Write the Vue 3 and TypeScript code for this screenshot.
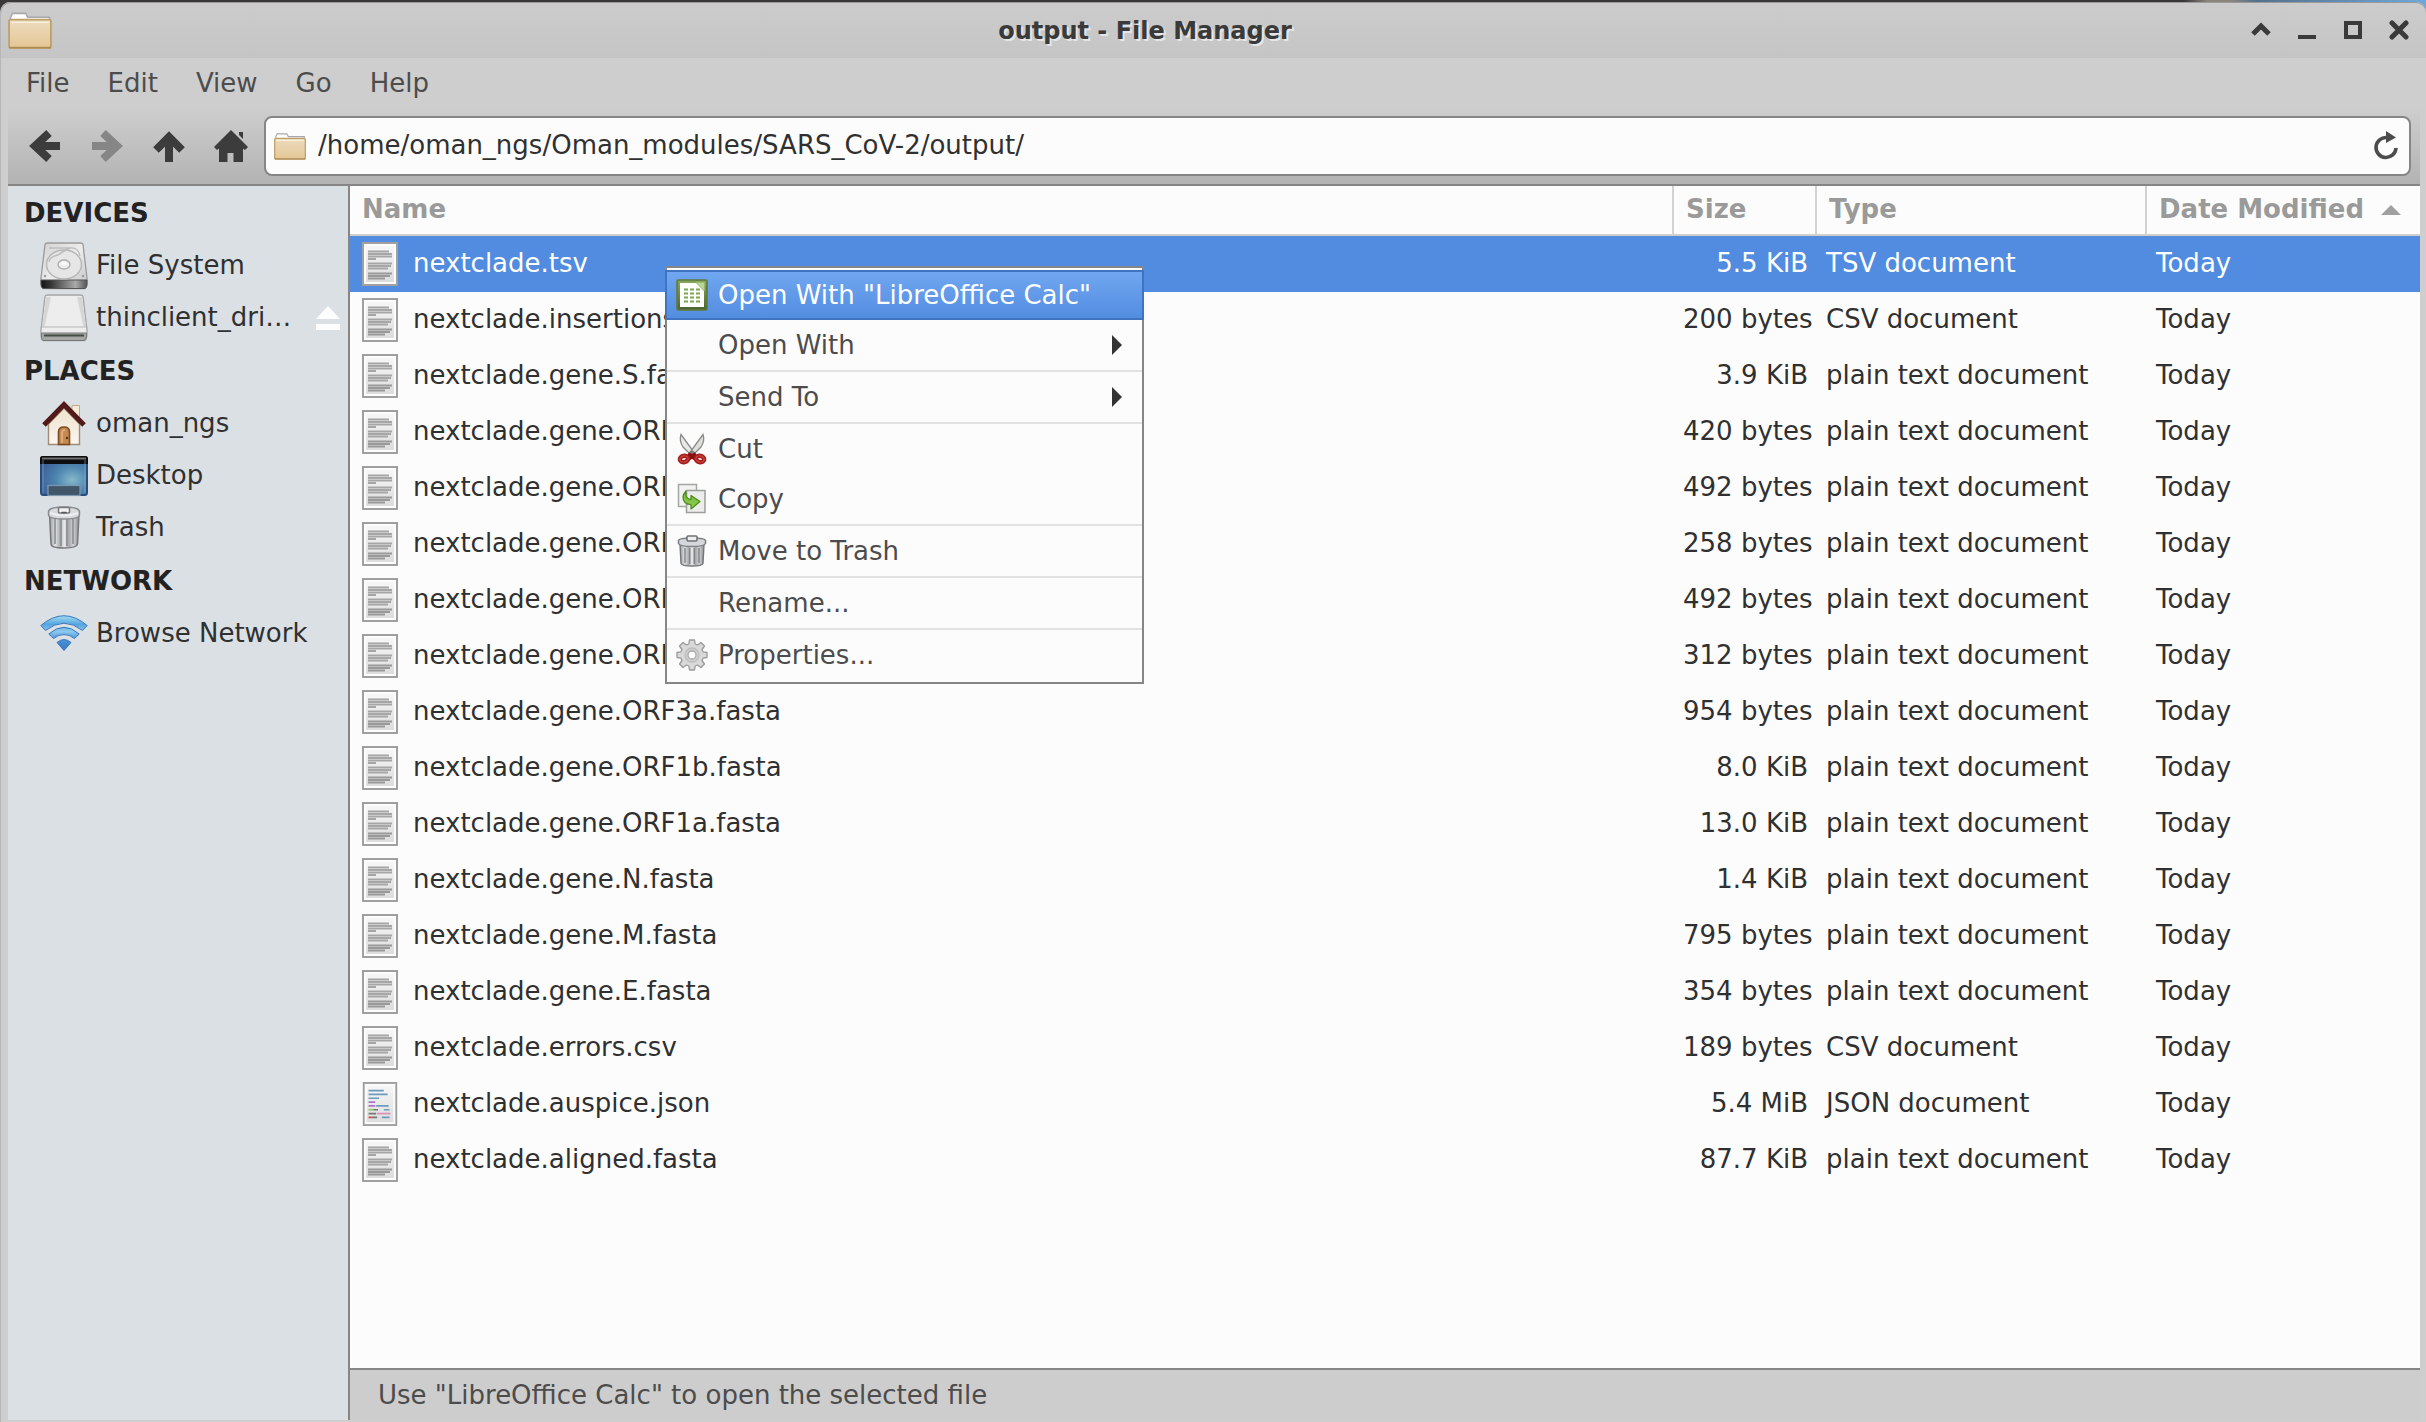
<script setup lang="ts">
import { ref } from 'vue'

interface FileRow {
  name: string
  size: string
  type: string
  icon: 'text' | 'json'
}

interface MenuEntry {
  label: string
  icon?: string
  submenu?: boolean
  endsGroup?: boolean
}

interface Place {
  label: string
  icon: string
  ejectable?: boolean
}

const path = ref('/home/oman_ngs/Oman_modules/SARS_CoV-2/output/')
const selected = ref('nextclade.tsv')

const menus = ['File', 'Edit', 'View', 'Go', 'Help']

const sections: { title: string; places: Place[] }[] = [
  {
    title: 'DEVICES',
    places: [
      { label: 'File System', icon: 'harddisk' },
      { label: 'thinclient_dri…', icon: 'removable', ejectable: true },
    ],
  },
  {
    title: 'PLACES',
    places: [
      { label: 'oman_ngs', icon: 'house' },
      { label: 'Desktop', icon: 'desktop' },
      { label: 'Trash', icon: 'trash-place' },
    ],
  },
  { title: 'NETWORK', places: [{ label: 'Browse Network', icon: 'wifi' }] },
]

const plain = (name: string, size: string): FileRow => ({
  name,
  size,
  type: 'plain text document',
  icon: 'text',
})

const files: FileRow[] = [
  { name: 'nextclade.tsv', size: '5.5 KiB', type: 'TSV document', icon: 'text' },
  { name: 'nextclade.insertions.csv', size: '200 bytes', type: 'CSV document', icon: 'text' },
  plain('nextclade.gene.S.fasta', '3.9 KiB'),
  plain('nextclade.gene.ORF9b.fasta', '420 bytes'),
  plain('nextclade.gene.ORF8.fasta', '492 bytes'),
  plain('nextclade.gene.ORF7b.fasta', '258 bytes'),
  plain('nextclade.gene.ORF7a.fasta', '492 bytes'),
  plain('nextclade.gene.ORF6.fasta', '312 bytes'),
  plain('nextclade.gene.ORF3a.fasta', '954 bytes'),
  plain('nextclade.gene.ORF1b.fasta', '8.0 KiB'),
  plain('nextclade.gene.ORF1a.fasta', '13.0 KiB'),
  plain('nextclade.gene.N.fasta', '1.4 KiB'),
  plain('nextclade.gene.M.fasta', '795 bytes'),
  plain('nextclade.gene.E.fasta', '354 bytes'),
  { name: 'nextclade.errors.csv', size: '189 bytes', type: 'CSV document', icon: 'text' },
  { name: 'nextclade.auspice.json', size: '5.4 MiB', type: 'JSON document', icon: 'json' },
  plain('nextclade.aligned.fasta', '87.7 KiB'),
]

const contextMenu: MenuEntry[] = [
  { label: 'Open With "LibreOffice Calc"', icon: 'calc' },
  { label: 'Open With', submenu: true, endsGroup: true },
  { label: 'Send To', submenu: true, endsGroup: true },
  { label: 'Cut', icon: 'cut' },
  { label: 'Copy', icon: 'copy', endsGroup: true },
  { label: 'Move to Trash', icon: 'trash', endsGroup: true },
  { label: 'Rename...', endsGroup: true },
  { label: 'Properties...', icon: 'gear' },
]
</script>

<template>
  <svg class="sprite" aria-hidden="true">
    <defs>
      <linearGradient id="g-folder" x1="0" y1="0" x2="0" y2="1">
        <stop offset="0" stop-color="#ecdcbe" /><stop offset="1" stop-color="#e4c695" />
      </linearGradient>
      <linearGradient id="g-paper" x1="0" y1="0" x2="0" y2="1">
        <stop offset="0" stop-color="#f6f6f6" /><stop offset="1" stop-color="#dddddd" />
      </linearGradient>
      <linearGradient id="g-disk" x1="0" y1="0" x2="1" y2="1">
        <stop offset="0" stop-color="#d2d2d2" /><stop offset=".5" stop-color="#ededed" /><stop offset="1" stop-color="#c4c4c4" />
      </linearGradient>
      <linearGradient id="g-base" x1="0" y1="0" x2="1" y2="0">
        <stop offset="0" stop-color="#111" /><stop offset=".2" stop-color="#333" /><stop offset=".75" stop-color="#aaa" /><stop offset="1" stop-color="#555" />
      </linearGradient>
      <linearGradient id="g-wall" x1="0" y1="0" x2="0" y2="1">
        <stop offset="0" stop-color="#efe2cf" /><stop offset="1" stop-color="#fbf6ef" />
      </linearGradient>
      <radialGradient id="g-screen" cx=".68" cy=".6" r=".7">
        <stop offset="0" stop-color="#86b9cb" /><stop offset=".5" stop-color="#4f86b0" /><stop offset="1" stop-color="#3d6399" />
      </radialGradient>
      <linearGradient id="g-can" x1="0" y1="0" x2="1" y2="0">
        <stop offset="0" stop-color="#999b9e" /><stop offset=".2" stop-color="#e2e3e4" /><stop offset=".35" stop-color="#a9abae" />
        <stop offset=".5" stop-color="#ececec" /><stop offset=".65" stop-color="#a5a7aa" /><stop offset=".8" stop-color="#d2d3d4" /><stop offset="1" stop-color="#8b8d90" />
      </linearGradient>
      <linearGradient id="g-wifi" x1="0" y1="0" x2="0" y2="48" gradientUnits="userSpaceOnUse">
        <stop offset=".12" stop-color="#a3dbf5" /><stop offset=".3" stop-color="#55a5e0" /><stop offset=".45" stop-color="#8ec8ef" /><stop offset=".6" stop-color="#4a93d6" /><stop offset="1" stop-color="#2f6ab8" />
      </linearGradient>
      <linearGradient id="g-calc" x1="0" y1="0" x2="0" y2="1">
        <stop offset="0" stop-color="#8aa860" /><stop offset="1" stop-color="#4c6430" />
      </linearGradient>
      <linearGradient id="g-green" x1="0" y1="0" x2="0" y2="1">
        <stop offset="0" stop-color="#6fb536" /><stop offset="1" stop-color="#93cf55" />
      </linearGradient>
    </defs>

    <symbol id="folder" viewBox="0 0 46 40">
      <path d="M2.500 12V7L4.500 2.500H18.500L20.500 6.500H43.500V12Z" fill="#fff" stroke="#a8a8b0" stroke-width="1.600" />
      <rect x="1" y="9" width="44" height="30" rx="1.500" fill="url(#g-folder)" stroke="#bf9f68" stroke-width="1.800" />
      <path d="M3 12H43" stroke="#f8f0e0" stroke-width="1.500" />
      <path d="M1 38.500H45" stroke="#a98b54" stroke-width="1.500" />
    </symbol>

    <symbol id="text" viewBox="0 0 36 44">
      <rect x="1" y="1" width="34" height="42" fill="#fcfcfc" stroke="#a0a0a0" stroke-width="2" />
      <rect x="4" y="4" width="28" height="36" fill="url(#g-paper)" />
      <g stroke="#a6a6a6" stroke-width="2">
        <path d="M6 9.500H27M6 12H30M6 14.500H30M6 17H14M6 21.500H30M6 24H29M6 26.500H26" />
        <path d="M6 31.500H30M6 34H28M6 36.500H23" stroke="#999" />
      </g>
    </symbol>

    <symbol id="json" viewBox="0 0 36 46">
      <rect x="1" y="1" width="34" height="44" fill="#fcfcfc" stroke="#a0a0a0" stroke-width="2" />
      <rect x="4" y="4" width="28" height="38" fill="url(#g-paper)" />
      <g stroke-width="1.800" fill="none">
        <path d="M6 9H22M6 13H26M6 17H17M14 25H27M22 29H28M20 37H28" stroke="#6a9cc0" />
        <path d="M6 21H13M6 25H13" stroke="#b070d0" />
        <path d="M6 29H11" stroke="#88cc66" /><path d="M11 29H16M6 33H14M9 37H15" stroke="#777" />
        <path d="M15 33H29" stroke="#d890b8" /><path d="M6 37H9" stroke="#e04040" />
      </g>
    </symbol>

    <symbol id="harddisk" viewBox="0 0 48 48">
      <path d="M5 2.500Q5.500 1 7.500 1H40.500Q42.500 1 43 2.500L47 36Q47.500 46 44.500 46.500H3.500Q.5 46 1 36Z" fill="url(#g-disk)" stroke="#9a9a9a" stroke-width="1.300" />
      <path d="M1 38H47V42Q47 46.500 44 46.500H4Q1 46.500 1 42Z" fill="url(#g-base)" stroke="#555" />
      <ellipse cx="24" cy="22.500" rx="17.500" ry="14.500" fill="#e6e6e6" stroke="#b5b5b5" stroke-width="1.400" />
      <path d="M9 6H30Q22 10 18 13Q9 15 9 20M30 6Q38 5 40 14" fill="none" stroke="#bdbdbd" stroke-width="1.400" />
      <ellipse cx="24" cy="22.500" rx="6" ry="4.500" fill="#eee" stroke="#b0b0b0" stroke-width="1.400" />
      <ellipse cx="24" cy="21.500" rx="3" ry="2" fill="#fafafa" />
      <circle cx="5" cy="34" r="1.200" fill="#999" /><circle cx="43" cy="34" r="1.200" fill="#999" />
    </symbol>

    <symbol id="removable" viewBox="0 0 48 48">
      <path d="M5 2.500Q5.500 1 7.500 1H40.500Q42.500 1 43 2.500L47 36Q47.500 46 44.500 46.500H3.500Q.5 46 1 36Z" fill="#ededed" stroke="#a4a4a4" stroke-width="1.300" />
      <path d="M6 3H11L4.500 33H2ZM42 3H37L43.500 33H46Z" fill="#d6d6d6" />
      <path d="M2 33H46" stroke="#c8c8c8" stroke-width="1.500" />
      <path d="M1.500 39H46.500V42Q46.500 46 44 46.500H4Q1 46.500 1.500 42Z" fill="#a5a8a5" stroke="#777" />
      <path d="M4 41.500H44" stroke="#444a44" stroke-width="2" />
    </symbol>

    <symbol id="house" viewBox="0 0 48 48">
      <path d="M32 18V5.500H39.500V18Z" fill="#f5ead8" stroke="#c2a888" />
      <path d="M8.500 24L24 8L39.500 24V44.500H8.500Z" fill="url(#g-wall)" stroke="#a08c74" stroke-width="1.400" />
      <path d="M4 25L24 4.500L44 25" fill="none" stroke="#51191a" stroke-width="5" stroke-linejoin="miter" />
      <path d="M18.500 44.500V32Q18.500 27 24 27Q29.500 27 29.500 32V44.500Z" fill="#c58a52" stroke="#7c4a20" stroke-width="1.600" />
      <path d="M22 43V33Q22 30 25 30" stroke="#deb383" stroke-width="1.600" fill="none" />
      <circle cx="27" cy="38" r="1.200" fill="#5a3416" />
    </symbol>

    <symbol id="desktop" viewBox="0 0 48 48">
      <rect x="1" y="5" width="46" height="38" rx="2.500" fill="url(#g-screen)" stroke="#294d7c" stroke-width="2" />
      <path d="M0 12V6.500Q0 4 2.500 4H45.500Q48 4 48 6.500V12Z" fill="#0c0d0e" />
      <path d="M2 6.500H46" stroke="#6e6e6e" stroke-width="2" />
      <path d="M3 8V41M45 8V41" stroke="#8fb0cc" stroke-width="1" opacity=".6" />
      <rect x="8" y="33.500" width="32" height="10" fill="#42566a" stroke="#7c98ae" stroke-width="1.200" />
    </symbol>

    <symbol id="trash-place" viewBox="0 0 48 48">
      <path d="M9.500 10L11 40Q11 44 24 44T37.500 40L39 10Z" fill="url(#g-can)" stroke="#77797c" stroke-width="1.500" />
      <path d="M15 15V40M21 15V42M27 15V42M33 15V40" stroke="#8b8d90" stroke-width="1.600" />
      <path d="M8.500 8Q8.500 3 24 3T39.500 8V11Q39 15 24 15T8.500 11Z" fill="#d9dbdd" stroke="#85888c" stroke-width="1.500" />
      <path d="M10 9Q24 14 38 9" fill="none" stroke="#f2f2f2" stroke-width="1.500" />
      <rect x="18.500" y="3.500" width="11" height="5.500" rx="1" fill="#f2f2f2" stroke="#75787c" stroke-width="1.500" />
      <path d="M21.500 8.500H26.500" stroke="#555" stroke-width="1.500" />
    </symbol>

    <symbol id="wifi" viewBox="0 0 48 48">
      <g fill="url(#g-wifi)" stroke="#3a78bd" stroke-width="1">
        <path d="M.8 15.500Q24-4 47.200 15.500L42.500 20.500Q24 6 5.500 20.500Z" />
        <path d="M8.800 24Q24 10.500 39.200 24L34.500 28.500Q24 20.500 13.500 28.500Z" />
        <path d="M17 32.500Q24 26.500 31 32.500L24 40.500Z" />
      </g>
    </symbol>

    <symbol id="calc" viewBox="0 0 32 32">
      <rect x="1" y="1" width="30" height="30" rx="1.500" fill="url(#g-calc)" stroke="#5d7a38" stroke-width="1.500" />
      <path d="M4 4H20L28 12V28H4Z" fill="#fff" />
      <path d="M20 3.500H28.500V12Z" fill="#b8d890" />
      <path d="M8 10.500H24M8 14.500H24M8 18.500H24M8 22.500H24" stroke="#7ba650" stroke-width="1.800" stroke-dasharray="4 2" />
    </symbol>

    <symbol id="cut" viewBox="0 0 32 32">
      <path d="M5 1.500Q3 8 7 14L14 21L17.500 18.500Z" fill="#e8e8e6" stroke="#888a85" stroke-width="1.300" />
      <path d="M27 1.500Q29 8 25 14L18 21L14.500 18.500Z" fill="#dededc" stroke="#888a85" stroke-width="1.300" />
      <path d="M12 20L16 17L20 20L16 22Z" fill="#7c8080" />
      <path d="M12 21L20 26M20 21L12 26" stroke="#8d1010" stroke-width="4" />
      <g fill="#f0dcdc" stroke="#a31c1a" stroke-width="4.400">
        <ellipse cx="8" cy="26" rx="4.200" ry="3.200" transform="rotate(-12 8 26)" />
        <ellipse cx="24" cy="26" rx="4.200" ry="3.200" transform="rotate(12 24 26)" />
      </g>
      <g fill="none" stroke="#cf4a44" stroke-width="1.200">
        <ellipse cx="8" cy="26" rx="4.200" ry="3.200" transform="rotate(-12 8 26)" />
        <ellipse cx="24" cy="26" rx="4.200" ry="3.200" transform="rotate(12 24 26)" />
      </g>
    </symbol>

    <symbol id="copy" viewBox="0 0 32 32">
      <rect x="2.500" y="1.500" width="18" height="22" fill="#f2f2f0" stroke="#a5a7a2" stroke-width="1.500" />
      <rect x="10.500" y="7.500" width="18.500" height="22" fill="#ececea" stroke="#9c9e9a" stroke-width="1.500" />
      <path d="M10 8Q4.500 14 9 19.500Q11 21.500 15 21.500V26L24 18.500L15 12.500V16.500Q9 16.500 10 8Z" fill="url(#g-green)" stroke="#4c8a1c" stroke-width="1.200" stroke-linejoin="round" />
    </symbol>

    <symbol id="trash" viewBox="0 0 32 32">
      <path d="M4 9L5 28.500Q6 31 16 31T27 28.500L28 9Z" fill="url(#g-can)" stroke="#74777c" stroke-width="1.400" />
      <path d="M9 13V28M13.700 13V29M18.300 13V29M23 13V28" stroke="#808388" stroke-width="1.400" />
      <path d="M2.500 5.500Q3 3 16 3T29.500 5.500V8.500Q28 11.500 16 11.500T2.500 8.500Z" fill="#d5d7da" stroke="#7c8086" stroke-width="1.500" />
      <rect x="11" y="1" width="10" height="5" rx="1" fill="#eee" stroke="#6c7076" stroke-width="1.500" />
    </symbol>

    <symbol id="gear" viewBox="0 0 32 32">
      <g fill="#d9d9d9" stroke="#9a9a9a" stroke-width="1.300" stroke-linejoin="round">
        <path d="M13.500 1H18.500L19.200 5L21.500 6L25 3.500L28.500 7L26 10.500L27 12.800L31 13.500V18.500L27 19.200L26 21.500L28.500 25L25 28.500L21.500 26L19.200 27L18.500 31H13.500L12.800 27L10.500 26L7 28.500L3.500 25L6 21.500L5 19.200L1 18.500V13.500L5 12.800L6 10.500L3.500 7L7 3.500L10.500 6L12.800 5Z" />
        <circle cx="16" cy="16" r="7" fill="#cfcfcf" stroke="#bdbdbd" />
        <circle cx="16" cy="16" r="4" fill="#fcfcfc" stroke="#a8a8a8" />
      </g>
    </symbol>
  </svg>

  <div class="desktop">
    <div class="window">
      <header class="titlebar">
        <svg class="app-icon"><use href="#folder" /></svg>
        <h1>output - File Manager</h1>
        <div class="window-buttons">
          <button type="button" aria-label="Roll up">
            <svg width="20" height="20" viewBox="0 0 20 20"><path d="M2 14L10 6L18 14" fill="none" stroke="#3a3a3a" stroke-width="5" /></svg>
          </button>
          <button type="button" aria-label="Minimize">
            <svg width="20" height="20" viewBox="0 0 20 20"><path d="M1 17H19" stroke="#3a3a3a" stroke-width="4" /></svg>
          </button>
          <button type="button" aria-label="Maximize">
            <svg width="20" height="20" viewBox="0 0 20 20"><path d="M3 3H17V17H3Z" fill="none" stroke="#3a3a3a" stroke-width="4" /></svg>
          </button>
          <button type="button" aria-label="Close">
            <svg width="20" height="20" viewBox="0 0 20 20"><path d="M3 3L17 17M17 3L3 17" stroke="#3a3a3a" stroke-width="5" stroke-linecap="round" /></svg>
          </button>
        </div>
      </header>

      <nav class="menubar" aria-label="Menu bar">
        <button v-for="menu in menus" :key="menu" type="button">{{ menu }}</button>
      </nav>

      <div class="client">
        <div class="toolbar">
          <button type="button" aria-label="Back">
            <svg viewBox="0 0 32 32"><path d="M20 3L6 16L20 29M7 16H31" /></svg>
          </button>
          <button type="button" aria-label="Forward" class="dim" disabled>
            <svg viewBox="0 0 32 32"><path d="M12 3L26 16L12 29M25 16H1" /></svg>
          </button>
          <button type="button" aria-label="Open parent folder">
            <svg viewBox="0 0 32 32"><path d="M3 20L16 7L29 20M16 8V32" /></svg>
          </button>
          <button type="button" aria-label="Home">
            <svg class="solid" viewBox="0 0 34 32"><path d="M17 0L0 17L3 20L5 18.500V32H13.500V23H19.500V32H29V18.500L31 20L34 17ZM25 2H29V9L25 5Z" /></svg>
          </button>
          <div class="pathbar">
            <svg class="path-icon"><use href="#folder" /></svg>
            <input v-model="path" type="text" aria-label="Location" />
            <button type="button" aria-label="Reload">
              <svg viewBox="0 0 26 30">
                <path d="M14 6.500A10 10 0 1 0 23 17" fill="none" stroke="#4c4c4c" stroke-width="3.600" />
                <path d="M13 0V12L23 6.500Z" fill="#4c4c4c" />
              </svg>
            </button>
          </div>
        </div>

        <div class="body">
          <aside class="sidebar">
            <section v-for="section in sections" :key="section.title">
              <h2>{{ section.title }}</h2>
              <a v-for="place in section.places" :key="place.label" href="#" @click.prevent>
                <svg class="place-icon"><use :href="`#${place.icon}`" /></svg>
                <span>{{ place.label }}</span>
                <svg v-if="place.ejectable" class="eject" viewBox="0 0 24 24">
                  <path d="M12 0L24 13H0ZM0 18H24V24H0Z" fill="#fdfdfd" />
                </svg>
              </a>
            </section>
          </aside>

          <main class="main">
            <div class="listing">
              <table>
                <colgroup>
                  <col />
                  <col class="col-size" />
                  <col class="col-type" />
                  <col class="col-date" />
                </colgroup>
                <thead>
                  <tr>
                    <th scope="col">Name</th>
                    <th scope="col">Size</th>
                    <th scope="col">Type</th>
                    <th scope="col" aria-sort="ascending">
                      Date Modified
                      <svg class="sort" viewBox="0 0 20 10"><path d="M10 0L20 10H0Z" fill="#a0a0a0" /></svg>
                    </th>
                  </tr>
                </thead>
                <tbody>
                  <tr
                    v-for="file in files"
                    :key="file.name"
                    :class="{ selected: file.name === selected }"
                    @click="selected = file.name"
                  >
                    <td>
                      <div class="file">
                        <svg class="file-icon"><use :href="`#${file.icon}`" /></svg>
                        <span>{{ file.name }}</span>
                      </div>
                    </td>
                    <td class="size">{{ file.size }}</td>
                    <td>{{ file.type }}</td>
                    <td>Today</td>
                  </tr>
                </tbody>
              </table>

              <ul class="context-menu" role="menu">
                <li
                  v-for="(entry, i) in contextMenu"
                  :key="entry.label"
                  role="none"
                  :class="{ active: i === 0, 'ends-group': entry.endsGroup }"
                >
                  <button type="button" role="menuitem">
                    <svg class="entry-icon"><use v-if="entry.icon" :href="`#${entry.icon}`" /></svg>
                    <span>{{ entry.label }}</span>
                    <svg v-if="entry.submenu" class="more" viewBox="0 0 10 20"><path d="M0 0L10 10L0 20Z" fill="#333" /></svg>
                  </button>
                </li>
              </ul>
            </div>

            <footer class="statusbar">Use "LibreOffice Calc" to open the selected file</footer>
          </main>
        </div>
      </div>
    </div>
  </div>
</template>

<style>
body {
  margin: 0;
  background: #cdcdcd;
}
</style>

<style scoped>
.sprite {
  position: absolute;
  width: 0;
  height: 0;
}

.desktop {
  box-sizing: border-box;
  display: flex;
  min-height: 100vh;
  padding-top: 2px;
  background: linear-gradient(to right, #3a3838 0 90%, #8a867c 91% 92%, #54718c 93%, #6fa8dc 100%);
  color: #303030;
  font: 26px/32px "DejaVu Sans", sans-serif;
}

button,
input {
  margin: 0;
  padding: 0;
  border: 0;
  background: none;
  color: inherit;
  font: inherit;
}

svg {
  display: block;
  flex: none;
}

.window {
  box-sizing: border-box;
  display: flex;
  flex: 1;
  flex-direction: column;
  min-width: 0;
  border-left: 1px solid #b6b6b6;
  border-radius: 10px 10px 0 0;
  background: #cecece;
}

.titlebar {
  display: flex;
  align-items: center;
  height: 56px;
  padding: 0 4px 0 7px;
  border-radius: 10px 10px 0 0;
  background: linear-gradient(#cccccc, #c5c5c5);
  box-shadow: inset 0 1px 0 #9a9a9a;
}

.app-icon {
  width: 44px;
  height: 38px;
}

.titlebar h1 {
  flex: 1;
  margin: 0;
  padding-top: 2px;
  color: #3a3a3a;
  font-size: 24px;
  text-align: center;
  text-shadow: 2px 2px 0 #e6e6e6;
}

.window-buttons {
  display: flex;
}

.window-buttons button {
  display: grid;
  place-items: center;
  width: 46px;
  height: 48px;
}

.menubar {
  display: flex;
  height: 50px;
  padding-left: 6px;
  color: #4c4c4c;
}

.menubar button {
  padding: 0 19px;
}

.client {
  display: flex;
  flex: 1;
  flex-direction: column;
  margin: 0 6px 2px 7px;
}

.toolbar {
  display: flex;
  align-items: center;
  height: 76px;
  padding: 0 9px 0 6px;
  border-bottom: 2px solid #868686;
  background: linear-gradient(#cecece, #b3b3b3);
}

.toolbar > button {
  display: grid;
  place-items: center;
  width: 62px;
  height: 60px;
}

.toolbar > button svg {
  width: 32px;
  height: 32px;
  fill: none;
  stroke: #3c3c3c;
  stroke-width: 8px;
}

.toolbar > button .solid {
  width: 34px;
  fill: #3c3c3c;
  stroke: none;
}

.toolbar > .dim svg {
  stroke: #868686;
}

.pathbar {
  box-sizing: border-box;
  display: flex;
  flex: 1;
  align-items: center;
  height: 60px;
  margin-left: 2px;
  padding: 0 10px 0 8px;
  border: 2px solid #868686;
  border-radius: 8px;
  background: #fcfcfc;
}

.path-icon {
  width: 32px;
  height: 28px;
}

.pathbar input {
  flex: 1;
  min-width: 0;
  height: 40px;
  padding: 0 12px 2px;
  outline: 0;
}

.pathbar button svg {
  width: 26px;
  height: 30px;
}

.body {
  display: flex;
  flex: 1;
}

.sidebar {
  box-sizing: border-box;
  flex: none;
  width: 342px;
  border-right: 2px solid #868686;
  background: #dbe0e5;
}

.sidebar h2 {
  margin: 0;
  padding: 0 16px;
  color: #222;
  font-size: 26px;
  line-height: 54px;
}

.sidebar a {
  display: flex;
  align-items: center;
  height: 52px;
  padding: 0 8px 0 32px;
  color: inherit;
  text-decoration: none;
}

.sidebar a span {
  flex: 1;
  padding: 0 0 2px 8px;
}

.place-icon {
  width: 48px;
  height: 48px;
}

.eject {
  width: 24px;
  height: 24px;
}

.main {
  display: flex;
  flex: 1;
  flex-direction: column;
  min-width: 0;
}

.listing {
  position: relative;
  flex: 1;
  background: #fcfcfc;
}

table {
  width: 100%;
  border-collapse: separate;
  border-spacing: 0;
  table-layout: fixed;
}

.col-size {
  width: 143px;
}

.col-type {
  width: 330px;
}

.col-date {
  width: 273px;
}

th {
  box-sizing: border-box;
  height: 50px;
  padding: 0 0 2px 12px;
  border-right: 2px solid #d2d2d2;
  border-bottom: 2px solid #d2cec8;
  color: #9a9a9a;
  text-align: left;
  white-space: nowrap;
}

th:last-child {
  border-right: 0;
}

.sort {
  display: inline-block;
  width: 20px;
  height: 10px;
  margin-left: 8px;
  vertical-align: 3px;
}

td {
  box-sizing: border-box;
  height: 56px;
  padding: 0 9px 2px;
  white-space: nowrap;
}

td:first-child {
  padding: 0 12px;
}

.size {
  text-align: right;
}

.selected {
  background: #528ce0;
  color: #fff;
}

.file {
  display: flex;
  align-items: center;
  gap: 15px;
}

.file span {
  padding-bottom: 2px;
}

.file-icon {
  width: 36px;
  height: 44px;
}

.context-menu {
  position: absolute;
  top: 80px;
  left: 315px;
  box-sizing: border-box;
  width: 479px;
  margin: 0;
  padding: 2px 0;
  border: 2px solid #868686;
  background: #fcfcfc;
  color: #4c4c4c;
  list-style: none;
}

.ends-group {
  border-bottom: 2px solid #e2e2e2;
}

.context-menu button {
  box-sizing: border-box;
  display: flex;
  align-items: center;
  width: 100%;
  height: 50px;
  padding: 0 20px 0 9px;
  text-align: left;
}

.context-menu span {
  flex: 1;
  padding-left: 10px;
}

.active {
  margin: 0 -2px;
  background: linear-gradient(#72a8f2, #528ce0);
  box-shadow: inset 0 0 0 2px #3f74c0;
  color: #fff;
}

.active button {
  padding: 0 22px 0 11px;
}

.entry-icon {
  width: 32px;
  height: 32px;
}

.more {
  width: 10px;
  height: 20px;
}

.statusbar {
  padding: 9px 28px;
  border-top: 2px solid #868686;
  background: #cdcdcd;
  color: #4c4c4c;
}
</style>
